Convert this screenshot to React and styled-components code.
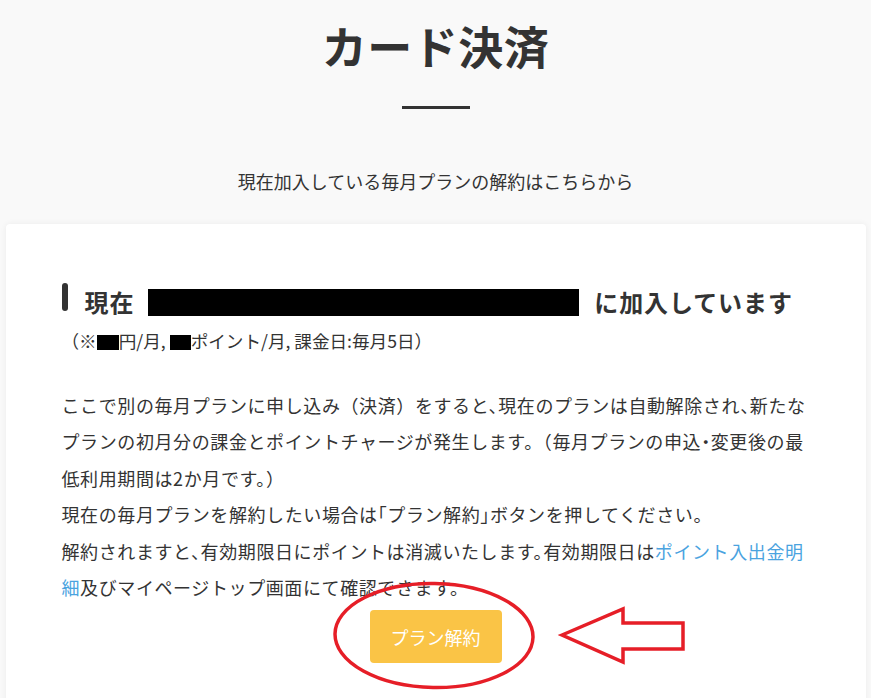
import React from "react";
import styled, { createGlobalStyle } from "styled-components";

const GlobalStyle = createGlobalStyle`
  html, body {
    margin: 0;
    padding: 0;
    background: #f9f9f9;
  }
  body {
    font-family: "Noto Sans CJK JP", "Noto Sans", sans-serif;
    color: #333;
  }
`;

export default function App() {
  return (
    <Page>
      <GlobalStyle />
      <Header>
        <Title>カード決済</Title>
        <Divider />
        <Lead>現在加入している毎月プランの解約はこちらから</Lead>
      </Header>

      <Card>
        <PlanHeading>
          <Bar />
          <span>現在</span>
          <Redacted $w={431} $h={27} $gapL={14} $gapR={15} />
          <span>に加入しています</span>
        </PlanHeading>
        <PlanNote>
          （※<Redacted $w={22} $h={15} />円/月, <Redacted $w={21} $h={15} />ポイント/月, 課金日:毎月5日）
        </PlanNote>

        <Body>
          ここで別の毎月プランに申し込み<Paren>（</Paren>決済<Paren>）</Paren>をすると、現在のプランは自動解除され、新たなプランの初月分の課金とポイントチャージが発生します。<Paren>（</Paren>毎月プランの申込・変更後の最低利用期間は2か月です。<Paren>）</Paren>
          <br />
          現在の毎月プランを解約したい場合は「プラン解約」ボタンを押してください。
          <br />
          解約されますと、有効期限日にポイントは消滅いたします。有効期限日は
          <Link href="#">ポイント入出金明細</Link>
          及びマイページトップ画面にて確認できます。
        </Body>

        <ButtonRow>
          <CancelButton type="button">プラン解約</CancelButton>
          <Annotation viewBox="0 0 360 112" width="360" height="112">
            <ellipse
              cx="104"
              cy="55.5"
              rx="99"
              ry="52"
              fill="none"
              stroke="#e61e27"
              strokeWidth="3.5"
              transform="rotate(1 104 55.5)"
            />
            <polygon
              points="232,55 293,29 293,43 353,43 353,69 293,69 293,82"
              fill="none"
              stroke="#e61e27"
              strokeWidth="3.5"
              strokeLinejoin="miter"
            />
          </Annotation>
        </ButtonRow>
      </Card>
    </Page>
  );
}

const Page = styled.div`
  width: 100%;
  min-height: 698px;
  overflow: hidden;
`;

const Header = styled.header`
  display: flex;
  flex-direction: column;
  align-items: center;
  padding-top: 14px;
`;

const Title = styled.h1`
  margin: 0;
  font-size: 45px;
  line-height: 63px;
  font-weight: 700;
  color: #333;
  letter-spacing: 0.5px;
`;

const Divider = styled.div`
  width: 68px;
  height: 3px;
  background: #333;
  margin-top: 29px;
`;

const Lead = styled.p`
  margin: 57px 0 0;
  font-size: 18px;
  line-height: 30px;
  color: #333;
`;

const Card = styled.section`
  max-width: 860px;
  margin: 28px auto 0;
  background: #fff;
  border-radius: 4px;
  box-shadow: 0 0 6px rgba(0, 0, 0, 0.06);
  padding: 60px 56px 80px;
  box-sizing: border-box;
`;

const PlanHeading = styled.h2`
  margin: 0;
  display: flex;
  align-items: flex-start;
  font-size: 24px;
  line-height: 36px;
  font-weight: 700;
  letter-spacing: 0.9px;
  color: #333;
`;

const Bar = styled.span`
  flex: none;
  width: 6px;
  height: 28px;
  margin-top: -1px;
  margin-right: 17px;
  border-radius: 3px;
  background: #333;
`;

const Redacted = styled.span`
  display: inline-block;
  flex: none;
  width: ${(p) => p.$w}px;
  height: ${(p) => p.$h}px;
  background: #000;
  vertical-align: -2px;
  align-self: center;
  margin-left: ${(p) => p.$gapL || 0}px;
  margin-right: ${(p) => p.$gapR || 0}px;
`;

const PlanNote = styled.p`
  margin: 8px 0 0;
  font-size: 17.6px;
  line-height: 26px;
  color: #333;
  text-spacing-trim: space-all;
`;

const Body = styled.p`
  margin: 33px 0 0;
  font-size: 18px;
  line-height: 36.4px;
  letter-spacing: 0.6px;
  font-feature-settings: "halt";
  text-spacing-trim: space-all;
  color: #333;
`;

/* round brackets keep their full width; the rest of the punctuation is half width */
const Paren = styled.span`
  font-feature-settings: normal;
`;

const Link = styled.a`
  color: #4aa3df;
  text-decoration: none;
`;

const ButtonRow = styled.div`
  position: relative;
  display: flex;
  justify-content: center;
  margin-top: 5px;
`;

const CancelButton = styled.button`
  width: 132px;
  height: 53px;
  border: none;
  border-radius: 4px;
  background: #fac446;
  color: #fff;
  font-family: "Noto Sans CJK JP", sans-serif;
  font-size: 18px;
  cursor: pointer;
`;

const Annotation = styled.svg`
  position: absolute;
  left: calc(50% - 106px);
  top: -30px;
  pointer-events: none;
  overflow: visible;
`;
